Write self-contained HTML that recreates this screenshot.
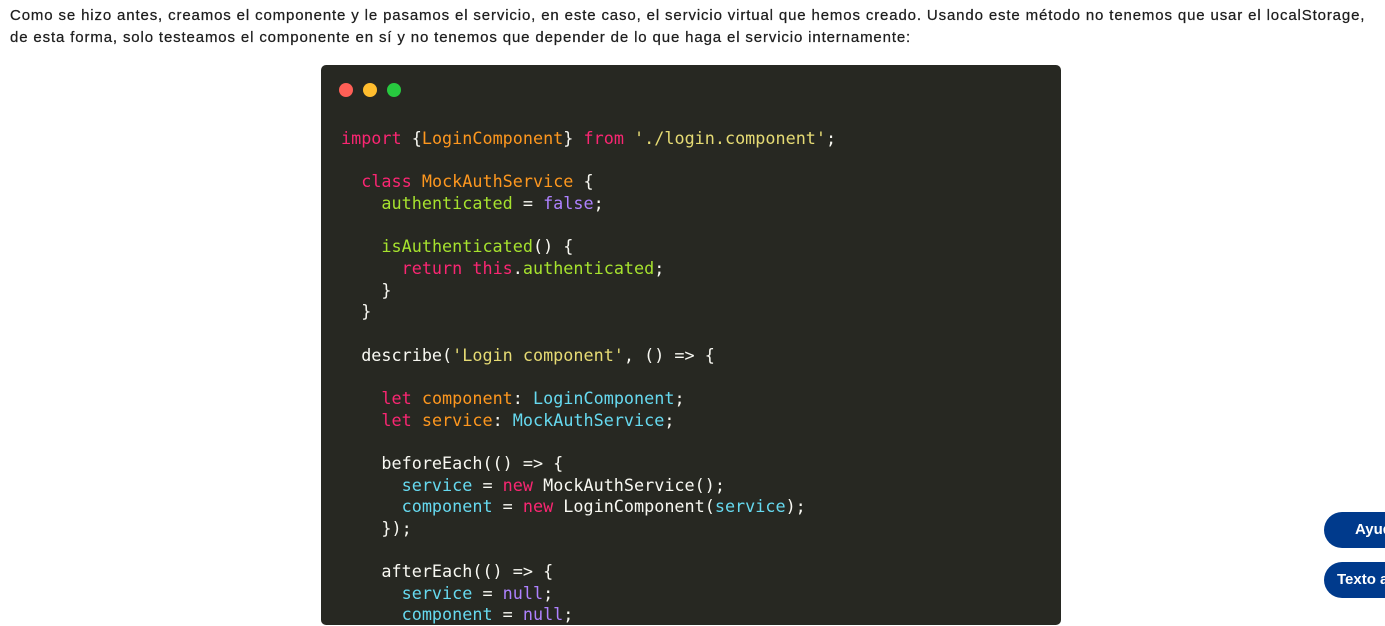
<!DOCTYPE html>
<html><head><meta charset="utf-8"><style>
body{margin:0;background:#fff;width:1385px;height:617px;overflow:hidden;position:relative;font-family:"Liberation Sans",sans-serif}
p{position:absolute;left:10px;top:5px;margin:0;font-size:15px;line-height:22px;color:#1e1e1e;letter-spacing:0.86px;width:1375px;white-space:nowrap;-webkit-text-stroke:0.25px #1e1e1e}
.code{position:absolute;left:321px;top:65px;width:740px;height:560px;background:#272822;border-radius:5px}
.dot{position:absolute;top:83px;width:14px;height:14px;border-radius:50%}
pre{position:absolute;left:341px;top:128px;margin:0;font-family:"DejaVu Sans Mono","Liberation Mono",monospace;font-size:16.8px;line-height:21.65px;color:#f8f8f2}
.k{color:#f92672}.o{color:#fd971f}.g{color:#a6e22e}.p{color:#ae81ff}.c{color:#66d9ef}.s{color:#e6db74}
.btn{position:absolute;left:1324px;height:36px;width:120px;background:#003a8c;border-radius:18px;color:#fff;font-weight:bold;font-size:15px;line-height:36px;padding-left:13px;box-sizing:border-box;white-space:nowrap}
</style></head><body>
<p>Como se hizo antes, creamos el componente y le pasamos el servicio, en este caso, el servicio virtual que hemos creado. Usando este método no tenemos que usar el localStorage,<br>de esta forma, solo testeamos el componente en sí y no tenemos que depender de lo que haga el servicio internamente:</p>
<div class="code"></div>
<div class="dot" style="left:339px;background:#ff5f56"></div>
<div class="dot" style="left:363px;background:#ffbd2e"></div>
<div class="dot" style="left:387px;background:#27c93f"></div>
<pre><span class="k">import</span> {<span class="o">LoginComponent</span>} <span class="k">from</span> <span class="s">'./login.component'</span>;

  <span class="k">class</span> <span class="o">MockAuthService</span> {
    <span class="g">authenticated</span> = <span class="p">false</span>;

    <span class="g">isAuthenticated</span>() {
      <span class="k">return</span> <span class="k">this</span>.<span class="g">authenticated</span>;
    }
  }

  describe(<span class="s">'Login component'</span>, () =&gt; {

    <span class="k">let</span> <span class="o">component</span>: <span class="c">LoginComponent</span>;
    <span class="k">let</span> <span class="o">service</span>: <span class="c">MockAuthService</span>;

    beforeEach(() =&gt; {
      <span class="c">service</span> = <span class="k">new</span> MockAuthService();
      <span class="c">component</span> = <span class="k">new</span> LoginComponent(<span class="c">service</span>);
    });

    afterEach(() =&gt; {
      <span class="c">service</span> = <span class="p">null</span>;
      <span class="c">component</span> = <span class="p">null</span>;</pre>
<div class="btn" style="top:512px;padding-left:31px">Ayuda</div>
<div class="btn" style="top:562px">Texto a</div>
</body></html>
